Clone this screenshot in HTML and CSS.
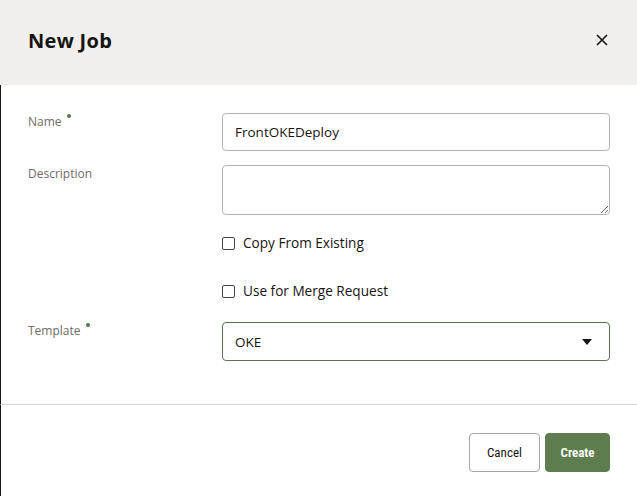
FILE: index.html
```html
<!DOCTYPE html>
<html>
<head>
<meta charset="utf-8">
<link rel="stylesheet" href="styles.css">
</head>
<body>
<div class="dialog">
  <header class="head">
    <h1 class="title">New Job</h1>
    <button class="close" aria-label="Close">
      <svg width="12" height="12" viewBox="0 0 12 12"><path d="M1 1L11 11M11 1L1 11" stroke="#161513" stroke-width="1.6" fill="none"/></svg>
    </button>
  </header>
  <main class="body">
    <div class="row">
      <label class="label">Name<span class="req"></span></label>
      <div class="field"><input class="input" value="FrontOKEDeploy"></div>
    </div>
    <div class="row">
      <label class="label">Description</label>
      <div class="field"><textarea class="textarea"></textarea></div>
    </div>
    <div class="row check-row">
      <span class="label"></span>
      <label class="check"><span class="box"></span>Copy From Existing</label>
    </div>
    <div class="row check-row second">
      <span class="label"></span>
      <label class="check"><span class="box"></span>Use for Merge Request</label>
    </div>
    <div class="row">
      <label class="label">Template<span class="req"></span></label>
      <div class="field">
        <div class="select">OKE
          <svg class="caret" width="10" height="6" viewBox="0 0 10 6"><path d="M0 0H10L5 6Z" fill="#161513"/></svg>
        </div>
      </div>
    </div>
  </main>
  <footer class="foot">
    <button class="btn cancel">Cancel</button>
    <button class="btn create">Create</button>
  </footer>
</div>
</body>
</html>
```
FILE: styles.css
```css
* { box-sizing: border-box; }
html, body { margin: 0; padding: 0; background: #fff; }
body { font-family: "Open Sans", "Noto Sans", sans-serif; color: #161513; }
.dialog { width: 637px; height: 496px; display: flex; flex-direction: column; }
.head {
  height: 85px; background: #f1efed; display: flex; align-items: center;
  justify-content: space-between; padding: 0 29px 4px 28px;
}
.title { margin: 0; font-size: 20px; font-weight: 700; letter-spacing: 0.3px; color: #161513; }
.close { border: 0; background: none; padding: 0; width: 12px; height: 12px; display: flex; margin-top: -2px; }
.body { flex: 1; border-left: 1px solid #161513; padding: 28px 27px 0 27px; display: flex; flex-direction: column; gap: 14px; }
.row { display: flex; align-items: flex-start; }
.label { width: 194px; font-size: 12px; color: #6f6c6a; margin-top: 0; display: flex; }
.req { width: 4px; height: 4px; border-radius: 50%; background: #5b7350; margin-left: 5px; margin-top: 1px; }
.field { flex: 1; }
.input, .textarea, .select {
  width: 388px; border: 1px solid #b3b1ae; border-radius: 4px; font-family: inherit;
  font-size: 13.5px; color: #161513; padding: 0 12px; display: block; background: #fff;
}
.input { height: 38px; }
.textarea { height: 50px; resize: vertical; margin: 0; }
.check-row { height: 14px; margin-top: 7px; }
.check-row.second { margin-top: 20px; }
.check { display: flex; align-items: center; font-size: 13.6px; color: #161513; gap: 8px; line-height: 14px; }
.box { width: 13px; height: 13px; border: 1px solid #4d3f4a; border-radius: 2px; background: #fff; }
.row:last-child { margin-top: 10px; }
.select { height: 39px; border-color: #5b7350; display: flex; align-items: center; justify-content: space-between; padding-right: 17px; }
.foot {
  height: 92px; border-left: 1px solid #161513; border-top: 1px solid #d8d6d4;
  display: flex; justify-content: flex-end; align-items: flex-start; gap: 5px; padding: 28px 27px 0 0;
}
.btn { height: 39px; border-radius: 4px; font-family: "Roboto Condensed", "Liberation Sans Narrow", "Open Sans", sans-serif; font-size: 13px; padding: 0; }
.cancel { background: #fff; border: 1px solid #a8a6a3; color: #161513; width: 71px; font-weight: 400; }
.create { background: #5e7d4e; border: 1px solid #5e7d4e; color: #fff; width: 65px; font-weight: 600; }
```
